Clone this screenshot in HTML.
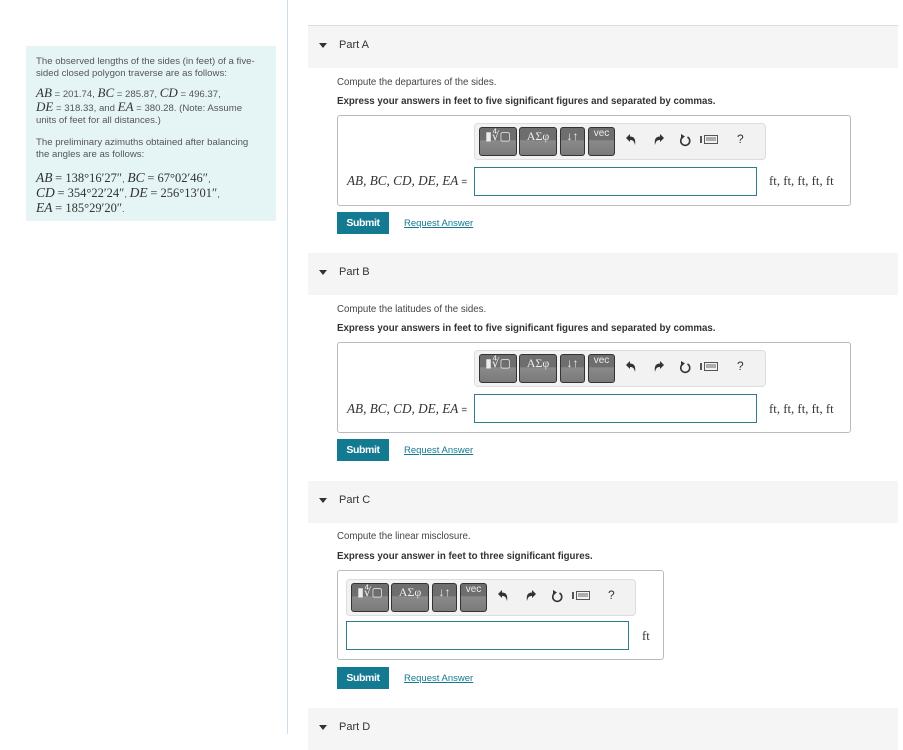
<!DOCTYPE html>
<html><head><meta charset="utf-8"><style>
body{margin:0;width:903px;height:734px;overflow:hidden;background:#fff;font-family:"Liberation Sans",sans-serif;color:#333;position:relative}
.a{position:absolute}
.side{left:26px;top:46px;width:250px;height:175px;background:#e5f5f6;font-size:9.6px;color:#555;line-height:11.5px}
.side p{margin:0;position:absolute;left:10px;width:228px;white-space:nowrap}
.m{font-family:"Liberation Serif",serif;font-style:italic;font-size:13.5px;color:#333}
.m2{font-family:"Liberation Serif",serif;font-style:italic;font-size:13px;color:#333}
.n{font-family:"Liberation Serif",serif;font-size:12.5px;color:#333}
.vl{left:287px;top:0;width:1px;height:734px;background:#cfdde6}
.hd{left:308px;width:590px;height:42px;background:#f5f5f5}
.hd span{position:absolute;left:31px;top:13px;font-size:11px;color:#333}
.hd i{position:absolute;left:11px;top:17px;width:0;height:0;border-left:4px solid transparent;border-right:4px solid transparent;border-top:5px solid #333}
.tx{left:337px;font-size:9.7px;color:#444}
.bx{left:337px;border:1px solid #bbb;border-radius:3px;background:#fff}
.tb{height:35px;background:#f2f2f2;border:1px solid #ddd;border-radius:4px}
.btn{position:absolute;top:3px;height:27px;background:linear-gradient(#6e6e6e 0,#6e6e6e 45%,#8a8a8a 46%,#7a7a7a);border:1px solid #333;border-radius:3px;color:#eee;font-size:12px;text-align:center;line-height:16px;font-family:"Liberation Serif",serif}
.ic{position:absolute;top:10px}
.q{position:absolute;top:8px;font-size:12px;color:#333}
.in{border:1px solid #2f7d8a;height:27px;background:#fff}
.lab{font-family:"Liberation Serif",serif;font-style:italic;font-size:13.2px;color:#333}
.ft{font-family:"Liberation Serif",serif;font-size:12.8px;color:#333}
.sub{left:337px;width:52px;height:22px;background:#137a92;color:#fff;font-size:10.5px;font-weight:bold;text-align:center;line-height:22px;letter-spacing:-.4px}
.ra{left:404px;font-size:9.5px;color:#137a92;text-decoration:underline}
</style></head><body>
<div class="a side">
<p style="top:10px;line-height:12px">The observed lengths of the sides (in feet) of a five-<br>sided closed polygon traverse are as follows:</p>
<p style="top:41px;line-height:12px"><span class="m2">AB</span> = 201.74, <span class="m2">BC</span> = 285.87, <span class="m2">CD</span> = 496.37,<br><span class="m2">DE</span> = 318.33, and <span class="m2">EA</span> = 380.28. (Note: Assume<br>units of feet for all distances.)</p>
<p style="top:91px;line-height:12px">The preliminary azimuths obtained after balancing<br>the angles are as follows:</p>
<p style="top:125px;line-height:13px"><span class="m">AB</span> <span class="n">= 138°16′27″</span>, <span class="m">BC</span> <span class="n">= 67°02′46″</span>,<br><span class="m">CD</span> <span class="n">= 354°22′24″</span>, <span class="m">DE</span> <span class="n">= 256°13′01″</span>,<br><span class="m">EA</span> <span class="n">= 185°29′20″</span>.</p>
</div>
<div class="a vl"></div>
<div class="a" style="left:308px;top:25px;width:590px;height:1px;background:#ddd"></div>

<div class="a hd" style="top:26px"><i></i><span>Part A</span></div>
<div class="a tx" style="top:77px">Compute the departures of the sides.</div>
<div class="a tx" style="top:96px;font-weight:bold;color:#333">Express your answers in feet to five significant figures and separated by commas.</div>
<div class="a bx" style="top:115px;width:512px;height:89px">
 <div class="a tb" style="left:136px;top:7px;width:290px">
  <div class="btn" style="left:4px;width:36px">▮∜▢</div><div class="btn" style="left:44px;width:36px">ΑΣφ</div><div class="btn" style="left:85px;width:23px">↓↑</div><div class="btn" style="left:113px;width:25px;line-height:11px;font-size:10px;font-family:'Liberation Sans'">vec</div>
  <svg class="ic" style="left:150px" width="12" height="12" viewBox="0 0 12 12"><path d="M1 4 L5 0 L5 2.5 C9 2.5 11 5 10 11 C9 7 8 6 5 6 L5 8 Z" fill="#333"/></svg>
  <svg class="ic" style="left:178px" width="12" height="12" viewBox="0 0 12 12"><path d="M11 4 L7 0 L7 2.5 C3 2.5 1 5 2 11 C3 7 4 6 7 6 L7 8 Z" fill="#333"/></svg>
  <svg class="ic" style="left:204px" width="12" height="13" viewBox="0 0 12 13"><path d="M4 3 A4.5 4.5 0 1 0 8.5 3" fill="none" stroke="#333" stroke-width="1.6"/><path d="M2 0 L6 2.5 L2 5 Z" fill="#333"/></svg>
  <svg class="ic" style="left:225px;top:11px" width="18" height="9" viewBox="0 0 18 9"><rect x="0" y="1" width="2" height="7" fill="#555"/><rect x="4.5" y="0.5" width="13" height="8" fill="none" stroke="#555"/><path d="M6 3H16M6 5H16" stroke="#666"/></svg>
  <span class="q" style="left:262px">?</span>
 </div>
 <span class="a lab" style="left:9px;top:57px">AB, BC, CD, DE, EA <span style="font-style:normal;font-family:'Liberation Sans';font-size:10px">=</span></span>
 <div class="a in" style="left:136px;top:51px;width:281px"></div>
 <span class="a ft" style="left:431px;top:58px">ft, ft, ft, ft, ft</span>
</div>
<div class="a sub" style="top:212px">Submit</div><div class="a ra" style="top:218px">Request Answer</div>

<div class="a hd" style="top:253px"><i></i><span>Part B</span></div>
<div class="a tx" style="top:304px">Compute the latitudes of the sides.</div>
<div class="a tx" style="top:323px;font-weight:bold;color:#333">Express your answers in feet to five significant figures and separated by commas.</div>
<div class="a bx" style="top:342px;width:512px;height:89px">
 <div class="a tb" style="left:136px;top:7px;width:290px">
  <div class="btn" style="left:4px;width:36px">▮∜▢</div><div class="btn" style="left:44px;width:36px">ΑΣφ</div><div class="btn" style="left:85px;width:23px">↓↑</div><div class="btn" style="left:113px;width:25px;line-height:11px;font-size:10px;font-family:'Liberation Sans'">vec</div>
  <svg class="ic" style="left:150px" width="12" height="12" viewBox="0 0 12 12"><path d="M1 4 L5 0 L5 2.5 C9 2.5 11 5 10 11 C9 7 8 6 5 6 L5 8 Z" fill="#333"/></svg>
  <svg class="ic" style="left:178px" width="12" height="12" viewBox="0 0 12 12"><path d="M11 4 L7 0 L7 2.5 C3 2.5 1 5 2 11 C3 7 4 6 7 6 L7 8 Z" fill="#333"/></svg>
  <svg class="ic" style="left:204px" width="12" height="13" viewBox="0 0 12 13"><path d="M4 3 A4.5 4.5 0 1 0 8.5 3" fill="none" stroke="#333" stroke-width="1.6"/><path d="M2 0 L6 2.5 L2 5 Z" fill="#333"/></svg>
  <svg class="ic" style="left:225px;top:11px" width="18" height="9" viewBox="0 0 18 9"><rect x="0" y="1" width="2" height="7" fill="#555"/><rect x="4.5" y="0.5" width="13" height="8" fill="none" stroke="#555"/><path d="M6 3H16M6 5H16" stroke="#666"/></svg>
  <span class="q" style="left:262px">?</span>
 </div>
 <span class="a lab" style="left:9px;top:58px">AB, BC, CD, DE, EA <span style="font-style:normal;font-family:'Liberation Sans';font-size:10px">=</span></span>
 <div class="a in" style="left:136px;top:51px;width:281px"></div>
 <span class="a ft" style="left:431px;top:59px">ft, ft, ft, ft, ft</span>
</div>
<div class="a sub" style="top:439px">Submit</div><div class="a ra" style="top:445px">Request Answer</div>

<div class="a hd" style="top:481px"><i></i><span>Part C</span></div>
<div class="a tx" style="top:531px">Compute the linear misclosure.</div>
<div class="a tx" style="top:551px;font-weight:bold;color:#333">Express your answer in feet to three significant figures.</div>
<div class="a bx" style="top:570px;width:325px;height:88px">
 <div class="a tb" style="left:8px;top:8px;width:288px">
  <div class="btn" style="left:4px;width:36px">▮∜▢</div><div class="btn" style="left:44px;width:36px">ΑΣφ</div><div class="btn" style="left:85px;width:23px">↓↑</div><div class="btn" style="left:113px;width:25px;line-height:11px;font-size:10px;font-family:'Liberation Sans'">vec</div>
  <svg class="ic" style="left:150px" width="12" height="12" viewBox="0 0 12 12"><path d="M1 4 L5 0 L5 2.5 C9 2.5 11 5 10 11 C9 7 8 6 5 6 L5 8 Z" fill="#333"/></svg>
  <svg class="ic" style="left:178px" width="12" height="12" viewBox="0 0 12 12"><path d="M11 4 L7 0 L7 2.5 C3 2.5 1 5 2 11 C3 7 4 6 7 6 L7 8 Z" fill="#333"/></svg>
  <svg class="ic" style="left:204px" width="12" height="13" viewBox="0 0 12 13"><path d="M4 3 A4.5 4.5 0 1 0 8.5 3" fill="none" stroke="#333" stroke-width="1.6"/><path d="M2 0 L6 2.5 L2 5 Z" fill="#333"/></svg>
  <svg class="ic" style="left:225px;top:11px" width="18" height="9" viewBox="0 0 18 9"><rect x="0" y="1" width="2" height="7" fill="#555"/><rect x="4.5" y="0.5" width="13" height="8" fill="none" stroke="#555"/><path d="M6 3H16M6 5H16" stroke="#666"/></svg>
  <span class="q" style="left:261px">?</span>
 </div>
 <div class="a in" style="left:8px;top:50px;width:281px"></div>
 <span class="a ft" style="left:304px;top:58px">ft</span>
</div>
<div class="a sub" style="top:667px">Submit</div><div class="a ra" style="top:673px">Request Answer</div>

<div class="a hd" style="top:708px"><i></i><span>Part D</span></div>
</body></html>
